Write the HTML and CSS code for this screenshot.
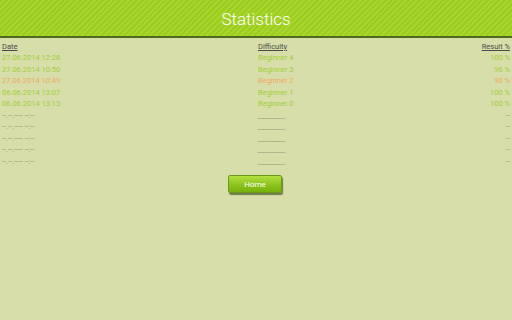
FILE: index.html
```html
<!DOCTYPE html>
<html lang="en">
<head>
  <meta charset="UTF-8">
  <meta name="viewport" content="width=device-width, initial-scale=1.0">
  <title>Statistics</title>
  <link rel="stylesheet" href="styles.css">
</head>
<body>
  <div class="header">Statistics</div>
  <div class="table">
    <div class="row head">
      <span>Date</span><span>Difficulty</span><span class="res">Result %</span>
    </div>
    <div class="row ok">
      <span>27.06.2014 12:28</span><span>Beginner 4</span><span class="res">100 %</span>
    </div>
    <div class="row ok">
      <span>27.06.2014 10:50</span><span>Beginner 3</span><span class="res">96 %</span>
    </div>
    <div class="row warn">
      <span>27.06.2014 10:49</span><span>Beginner 2</span><span class="res">90 %</span>
    </div>
    <div class="row ok">
      <span>06.06.2014 13:07</span><span>Beginner 1</span><span class="res">100 %</span>
    </div>
    <div class="row ok">
      <span>06.06.2014 13:13</span><span>Beginner 0</span><span class="res">100 %</span>
    </div>
    <div class="row empty">
      <span>--.--.---- --:--</span><span>________</span><span class="res">--</span>
    </div>
    <div class="row empty">
      <span>--.--.---- --:--</span><span>________</span><span class="res">--</span>
    </div>
    <div class="row empty">
      <span>--.--.---- --:--</span><span>________</span><span class="res">--</span>
    </div>
    <div class="row empty">
      <span>--.--.---- --:--</span><span>________</span><span class="res">--</span>
    </div>
    <div class="row empty">
      <span>--.--.---- --:--</span><span>________</span><span class="res">--</span>
    </div>
  </div>
  <div class="actions">
    <button class="home">Home</button>
  </div>
</body>
</html>
```

FILE: styles.css
```css
body {
  margin: 0;
  width: 512px;
  height: 320px;
  overflow: hidden;
  background: #d8dea9;
  font-family: Roboto, "Liberation Sans", sans-serif;
}
.header {
  height: 36px;
  line-height: 38px;
  text-align: center;
  color: #ffffff;
  font-size: 17px;
  font-weight: 300;
  background: repeating-linear-gradient(135deg, #9ccd1e 0px, #9ccd1e 2px, #a8d62e 2px, #a8d62e 4px);
  border-bottom: 2px solid #4d6b1f;
}
.table {
  padding-top: 2.5px;
}
.row {
  display: grid;
  grid-template-columns: 256px 1fr auto;
  height: 11.5px;
  line-height: 11.5px;
  font-size: 7.5px;
  padding: 0 2px;
}
.head {
  color: #4a4a4a;
  text-decoration: underline;
}
.ok {
  color: #9fcf3a;
}
.warn {
  color: #eeaa62;
}
.empty {
  color: #9a9a7a;
}
.res {
  text-align: right;
}
.actions {
  display: flex;
  justify-content: center;
  margin-top: 8px;
}
.home {
  width: 54px;
  height: 18px;
  margin-left: -2px;
  padding: 0;
  font-family: Roboto, "Liberation Sans", sans-serif;
  font-size: 8px;
  color: #ffffff;
  border: 1px solid #6c9a14;
  border-radius: 2px;
  background: linear-gradient(#b2e040, #8cc41c 55%, #78b00e);
  box-shadow: 1px 2px 1px rgba(40, 60, 10, 0.6);
  cursor: pointer;
}
```
